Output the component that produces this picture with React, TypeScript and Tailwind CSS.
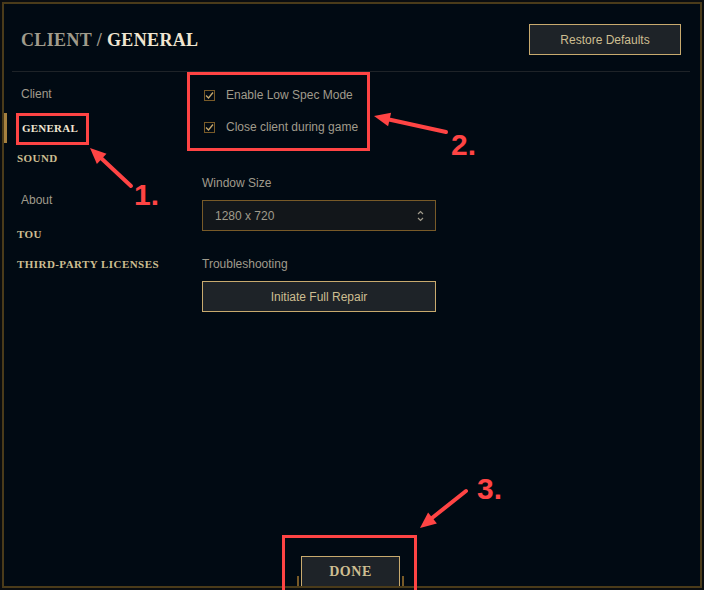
import React from "react";

const serif = "font-['Liberation_Serif',serif]";
const sans = "font-['Liberation_Sans',Arial,sans-serif]";

const Check = () => (
  <span className="flex h-[11px] w-[11px] items-center justify-center border border-[#785a28]">
    <svg width="9" height="9" viewBox="0 0 9 9">
      <path d="M1 4.5 L3.5 7 L8 1.5" fill="none" stroke="#c8aa6e" strokeWidth="1.3" />
    </svg>
  </span>
);

const NavItem = ({ label, className }: { label: string; className: string }) => (
  <div className={`flex items-center ${className}`}>{label}</div>
);

const Annotations = () => {
  const red = "#ff4444";
  return (
    <svg className="pointer-events-none absolute left-0 top-0" width="704" height="590">
      {/* boxes */}
      <rect x="17.5" y="114.5" width="70" height="29" fill="none" stroke={red} strokeWidth="3" />
      <rect x="188.5" y="73.5" width="180" height="76" fill="none" stroke={red} strokeWidth="3" />
      <rect x="283.5" y="536.5" width="132" height="60" fill="none" stroke={red} strokeWidth="3" />
      {/* arrow 1 */}
      <line x1="131" y1="186" x2="101" y2="158" stroke={red} strokeWidth="4" strokeLinecap="round" />
      <polygon points="90,148 106.5,153.8 96.9,164" fill={red} />
      {/* arrow 2 */}
      <line x1="446" y1="132" x2="389" y2="119.5" stroke={red} strokeWidth="4" strokeLinecap="round" />
      <polygon points="374,116 391.1,112.7 388.1,126.3" fill={red} />
      {/* arrow 3 */}
      <line x1="466" y1="491" x2="432" y2="518" stroke={red} strokeWidth="4" strokeLinecap="round" />
      <polygon points="420,528 436.9,523.5 428.1,512.5" fill={red} />
      <text x="134" y="205" fill={red} fontSize="30" fontWeight="700" fontFamily="Liberation Sans, Arial, sans-serif">
        1.
      </text>
      <text x="451" y="155" fill={red} fontSize="30" fontWeight="700" fontFamily="Liberation Sans, Arial, sans-serif">
        2.
      </text>
      <text x="477" y="499" fill={red} fontSize="30" fontWeight="700" fontFamily="Liberation Sans, Arial, sans-serif">
        3.
      </text>
    </svg>
  );
};

export default function App() {
  return (
    <div className="relative h-[590px] w-[704px] overflow-hidden bg-[#0a0d10]">
      {/* Frame */}
      <div className="ml-[2px] mt-[2px] flex h-[586px] w-[700px] flex-col border-2 border-[#4a3b1a] bg-[#010a13]">
        {/* Header */}
        <div className="flex h-[67px] items-start justify-between pl-[17px] pr-[19px] pt-[20px]">
          <h1 className={`${serif} mt-[5px] text-[18px] font-bold leading-[22px] tracking-[0.02em]`}>
            <span className="text-[#a09b8c]">CLIENT / </span>
            <span className="text-[#f0e6d2]">GENERAL</span>
          </h1>
          <button
            className={`${sans} h-[31px] w-[152px] border border-[#c8aa6e] bg-[#1e2328] text-[12px] text-[#cdbe91]`}
          >
            Restore Defaults
          </button>
        </div>
        <div className="ml-[8px] h-px w-[678px] bg-[#1e2328]" />

        {/* Body */}
        <div className="flex flex-1">
          {/* Nav */}
          <div className="flex w-[198px] flex-col text-[11px]">
            <NavItem label="Client" className={`${sans} mt-[12px] h-[20px] pl-[17px] text-[12px] text-[#a09b8c]`} />
            <div className="mt-[9px] flex h-[30px] items-center">
              <span className="h-[30px] w-[3px] bg-[#a5803f]" />
              <span className={`${serif} ml-[15px] font-bold tracking-[0.02em] text-[#f0e6d2]`}>GENERAL</span>
            </div>
            <NavItem
              label="SOUND"
              className={`${serif} h-[30px] pl-[13px] font-bold tracking-[0.04em] text-[#cdbe91]`}
            />
            <NavItem label="About" className={`${sans} mt-[17px] h-[20px] pl-[17px] text-[12px] text-[#a09b8c]`} />
            <NavItem
              label="TOU"
              className={`${serif} mt-[9px] h-[30px] pl-[13px] font-bold tracking-[0.04em] text-[#cdbe91]`}
            />
            <NavItem
              label="THIRD-PARTY LICENSES"
              className={`${serif} h-[30px] pl-[13px] font-bold tracking-[0.04em] text-[#cdbe91]`}
            />
          </div>

          {/* Settings */}
          <div className={`${sans} flex flex-col text-[12px] text-[#a09b8c]`}>
            <div className="mt-[7px] flex h-[32px] items-center gap-[11px] pl-[2px]">
              <Check />
              <span>Enable Low Spec Mode</span>
            </div>
            <div className="flex h-[32px] items-center gap-[11px] pl-[2px]">
              <Check />
              <span>Close client during game</span>
            </div>
            <div className="mt-[32px] h-[16px] leading-[16px]">Window Size</div>
            <div className="mt-[9px] flex h-[31px] w-[234px] items-center justify-between border border-[#785a28] bg-[#12161a] pl-[12px] pr-[11px] text-[#a09b8c]">
              <span>1280 x 720</span>
              <svg width="7" height="12" viewBox="0 0 7 12">
                <path d="M1 4 L3.5 1.5 L6 4 M1 8 L3.5 10.5 L6 8" fill="none" stroke="#a09b8c" strokeWidth="1.2" />
              </svg>
            </div>
            <div className="mt-[25px] h-[16px] leading-[16px]">Troubleshooting</div>
            <button className="mt-[9px] h-[31px] w-[234px] border border-[#c8aa6e] bg-[#1e2328] text-[12px] text-[#cdbe91]">
              Initiate Full Repair
            </button>
          </div>
        </div>

        {/* Footer */}
        <div className="flex h-[30px] items-end pl-[293px]">
          <span className="h-[10px] w-[2px] bg-[#785a28]" />
          <button
            className={`${serif} mx-[2px] h-[30px] w-[99px] border border-b-0 border-[#c8aa6e] bg-[#1e2328] text-[14px] font-bold tracking-[0.04em] text-[#cdbe91]`}
          >
            DONE
          </button>
          <span className="h-[10px] w-[2px] bg-[#785a28]" />
        </div>
      </div>
      <Annotations />
    </div>
  );
}
